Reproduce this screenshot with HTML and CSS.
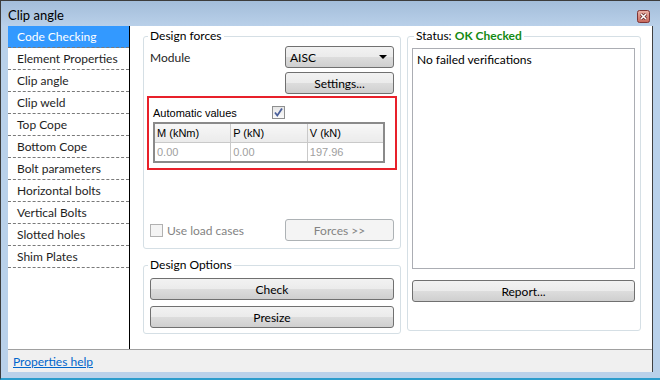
FILE: index.html
```html
<!DOCTYPE html>
<html lang="en">
  <head>
    <meta charset="UTF-8" />
    <meta name="viewport" content="width=device-width, initial-scale=1.0" />
    <title>Clip angle</title>
    <link rel="stylesheet" href="styles.css">
  </head>
  <body>
    <div class="window">
      <div class="titlebar">
        <span class="title">Clip angle</span>
        <span class="close">
          <svg width="13" height="13" viewBox="0 0 13 13">
            <defs>
              <linearGradient id="cg" x1="0" y1="0" x2="0" y2="1">
                <stop offset="0" stop-color="#eab3a8" />
                <stop offset="1" stop-color="#c6665a" />
              </linearGradient>
            </defs>
            <rect x="0.5" y="0.5" width="12" height="12" rx="2" fill="url(#cg)" stroke="#7e3434" />
            <path d="M4 4 L9 9 M9 4 L4 9" stroke="#5a2020" stroke-width="3" />
            <path d="M4 4 L9 9 M9 4 L4 9" stroke="#ffffff" stroke-width="1.6" />
          </svg>
        </span>
      </div>

      <div class="frame">
        <div class="client">
          <div class="main">
            <ul class="nav">
              <li class="selected">Code Checking</li>
              <li>Element Properties</li>
              <li>Clip angle</li>
              <li>Clip weld</li>
              <li>Top Cope</li>
              <li>Bottom Cope</li>
              <li>Bolt parameters</li>
              <li>Horizontal bolts</li>
              <li>Vertical Bolts</li>
              <li>Slotted holes</li>
              <li>Shim Plates</li>
            </ul>

            <div class="content">
              <div class="left-col">
                <fieldset class="group forces">
                  <legend>Design forces</legend>
                  <div class="row">
                    <span>Module</span>
                    <div class="select">AISC<span class="arrow"></span></div>
                  </div>
                  <div class="row right">
                    <button class="btn small">Settings...</button>
                  </div>

                  <div class="auto-box">
                    <div class="auto-row">
                      <span class="auto-label">Automatic values</span>
                      <span class="check checked">
                        <svg width="13" height="13" viewBox="0 0 13 13">
                          <path d="M3 6.5 L5.3 9.5 L10 2.5" fill="none" stroke="#4a5f9a" stroke-width="1.8" />
                        </svg>
                      </span>
                    </div>
                    <table class="grid">
                      <thead>
                        <tr>
                          <th>M (kNm)</th>
                          <th>P (kN)</th>
                          <th>V (kN)</th>
                        </tr>
                      </thead>
                      <tbody>
                        <tr>
                          <td>0.00</td>
                          <td>0.00</td>
                          <td>197.96</td>
                        </tr>
                      </tbody>
                    </table>
                  </div>

                  <div class="row load">
                    <label class="disabled"><span class="check"></span>Use load cases</label>
                    <button class="btn small" disabled>Forces &gt;&gt;</button>
                  </div>
                </fieldset>

                <fieldset class="group options">
                  <legend>Design Options</legend>
                  <button class="btn">Check</button>
                  <button class="btn">Presize</button>
                </fieldset>
              </div>

              <fieldset class="group status">
                <legend>Status: <span class="ok">OK Checked</span></legend>
                <div class="textbox">No failed verifications</div>
                <button class="btn">Report...</button>
              </fieldset>
            </div>
          </div>

          <div class="footer">
            <a href="#">Properties help</a>
          </div>
        </div>
      </div>
    </div>
  </body>
</html>
```

FILE: styles.css
```css
body {
  margin: 0;
  font-family: "Lato", "Noto Sans", sans-serif;
  font-size: 12px;
  color: #1e1e1e;
}

.window {
  width: 660px;
  height: 380px;
  box-sizing: border-box;
  border-top: 1px solid #3c3c3c;
  border-left: 1px solid #3c3c3c;
  border-bottom: 2px solid #2b9ccc;
  background: #b9d1ea;
  display: flex;
  flex-direction: column;
}

.titlebar {
  height: 25px;
  display: flex;
  align-items: center;
  justify-content: space-between;
  padding: 3px 10px 0 7px;
  box-sizing: border-box;
  background: linear-gradient(#a3bdda, #b9d0e9);
}
.title {
  font-size: 13px;
  color: #000;
}
.close {
  display: flex;
  margin-top: 3px;
}

.frame {
  flex: 1;
  display: flex;
  padding: 0 7px 6px 7px;
  min-height: 0;
}

.client {
  flex: 1;
  display: flex;
  flex-direction: column;
  background: #fff;
  border-right: 1px solid #404040;
}

.main {
  flex: 1;
  display: flex;
  min-height: 0;
}

/* left navigation list */
.nav {
  list-style: none;
  margin: 0;
  padding: 0;
  width: 121px;
  border-right: 1px solid #000;
}
.nav li {
  height: 21px;
  line-height: 21px;
  padding-left: 9px;
  border-bottom: 1px dashed #7a7a7a;
  white-space: nowrap;
}
.nav li.selected {
  background: #3399ff;
  color: #fff;
}

.content {
  flex: 1;
  display: flex;
  gap: 6px;
  padding: 2px 11px 0 13px;
}

.left-col {
  width: 258px;
  display: flex;
  flex-direction: column;
  gap: 8px;
}

.group {
  margin: 0;
  border: 1px solid #d5dfe5;
  border-radius: 3px;
  min-width: 0;
  box-sizing: border-box;
  display: flex;
  flex-direction: column;
}
.group legend {
  line-height: 16px;
  padding: 0 2px;
  margin-left: -2px;
  color: #000;
}

.forces {
  height: 221px;
  padding: 2px 6px 7px 6px;
}

.row {
  display: flex;
  align-items: center;
  justify-content: space-between;
  height: 22px;
}
.row + .row {
  margin-top: 4px;
}
.row.right {
  justify-content: flex-end;
}
.row.load {
  margin-top: 49px;
}

.select {
  width: 109px;
  height: 22px;
  border: 1px solid #707070;
  border-radius: 3px;
  background: linear-gradient(#f2f2f2 0%, #ebebeb 50%, #dddddd 50%, #cfcfcf 100%);
  display: flex;
  align-items: center;
  justify-content: space-between;
  padding: 0 6px 0 4px;
  box-sizing: border-box;
  color: #000;
}
.arrow {
  width: 0;
  height: 0;
  border-left: 4px solid transparent;
  border-right: 4px solid transparent;
  border-top: 4px solid #000;
}

.btn {
  height: 22px;
  border: 1px solid #707070;
  border-radius: 3px;
  background: linear-gradient(#f2f2f2 0%, #ebebeb 50%, #dddddd 50%, #cfcfcf 100%);
  font-family: inherit;
  font-size: 12px;
  color: #000;
  padding: 0;
}
.btn.small {
  width: 109px;
}
.btn:disabled {
  background: #f4f4f4;
  border-color: #adb2b5;
  color: #838383;
}

/* highlighted automatic values block */
.auto-box {
  margin: 2px -3px 0 -3px;
  border: 2px solid #e8202a;
  padding: 4px 4px 5px 4px;
  font-family: "Liberation Sans", Arial, sans-serif;
  font-size: 11px;
}
.auto-row {
  display: flex;
  align-items: center;
  height: 17px;
  margin-top: 2px;
}
.auto-label {
  width: 119px;
  color: #000;
}

.check {
  width: 11px;
  height: 11px;
  border: 1px solid #b1b1b1;
  background: #f4f4f4;
  display: inline-flex;
}
.check.checked {
  border-color: #8e8f8f;
  background: linear-gradient(#e6e6e6, #fafafa);
}
.check svg {
  margin: -1px;
}

.grid {
  border-collapse: collapse;
  width: 232px;
  border: 2px solid #8a8a8a;
  margin-top: 1px;
}
.grid th,
.grid td {
  border: 1px solid #c9c9c9;
  text-align: left;
  font-weight: normal;
  height: 18px;
  padding: 0 0 0 2px;
}
.grid th {
  background: linear-gradient(#f7f7f7, #ebebeb);
  color: #000;
  width: 33%;
}
.grid td {
  color: #a0a0a0;
}

label.disabled {
  display: flex;
  align-items: center;
  gap: 4px;
  color: #838383;
}

.options {
  padding: 5px 6px 5px 6px;
  gap: 6px;
}

.status {
  width: 234px;
  height: 303px;
  padding: 4px 5px 0 4px;
}
.status .ok {
  color: #138a13;
  font-weight: bold;
}
.status legend {
  margin-left: 2px;
}
.textbox {
  height: 213px;
  border: 1px solid #abadb3;
  padding: 3px 4px;
  color: #000;
}
.status .btn {
  margin-top: 11px;
}

.footer {
  height: 22px;
  border-top: 1px solid #a0a0a0;
  background: #f0f0f0;
  display: flex;
  align-items: center;
  padding-left: 5px;
}
.footer a {
  color: #0066cc;
}
```
